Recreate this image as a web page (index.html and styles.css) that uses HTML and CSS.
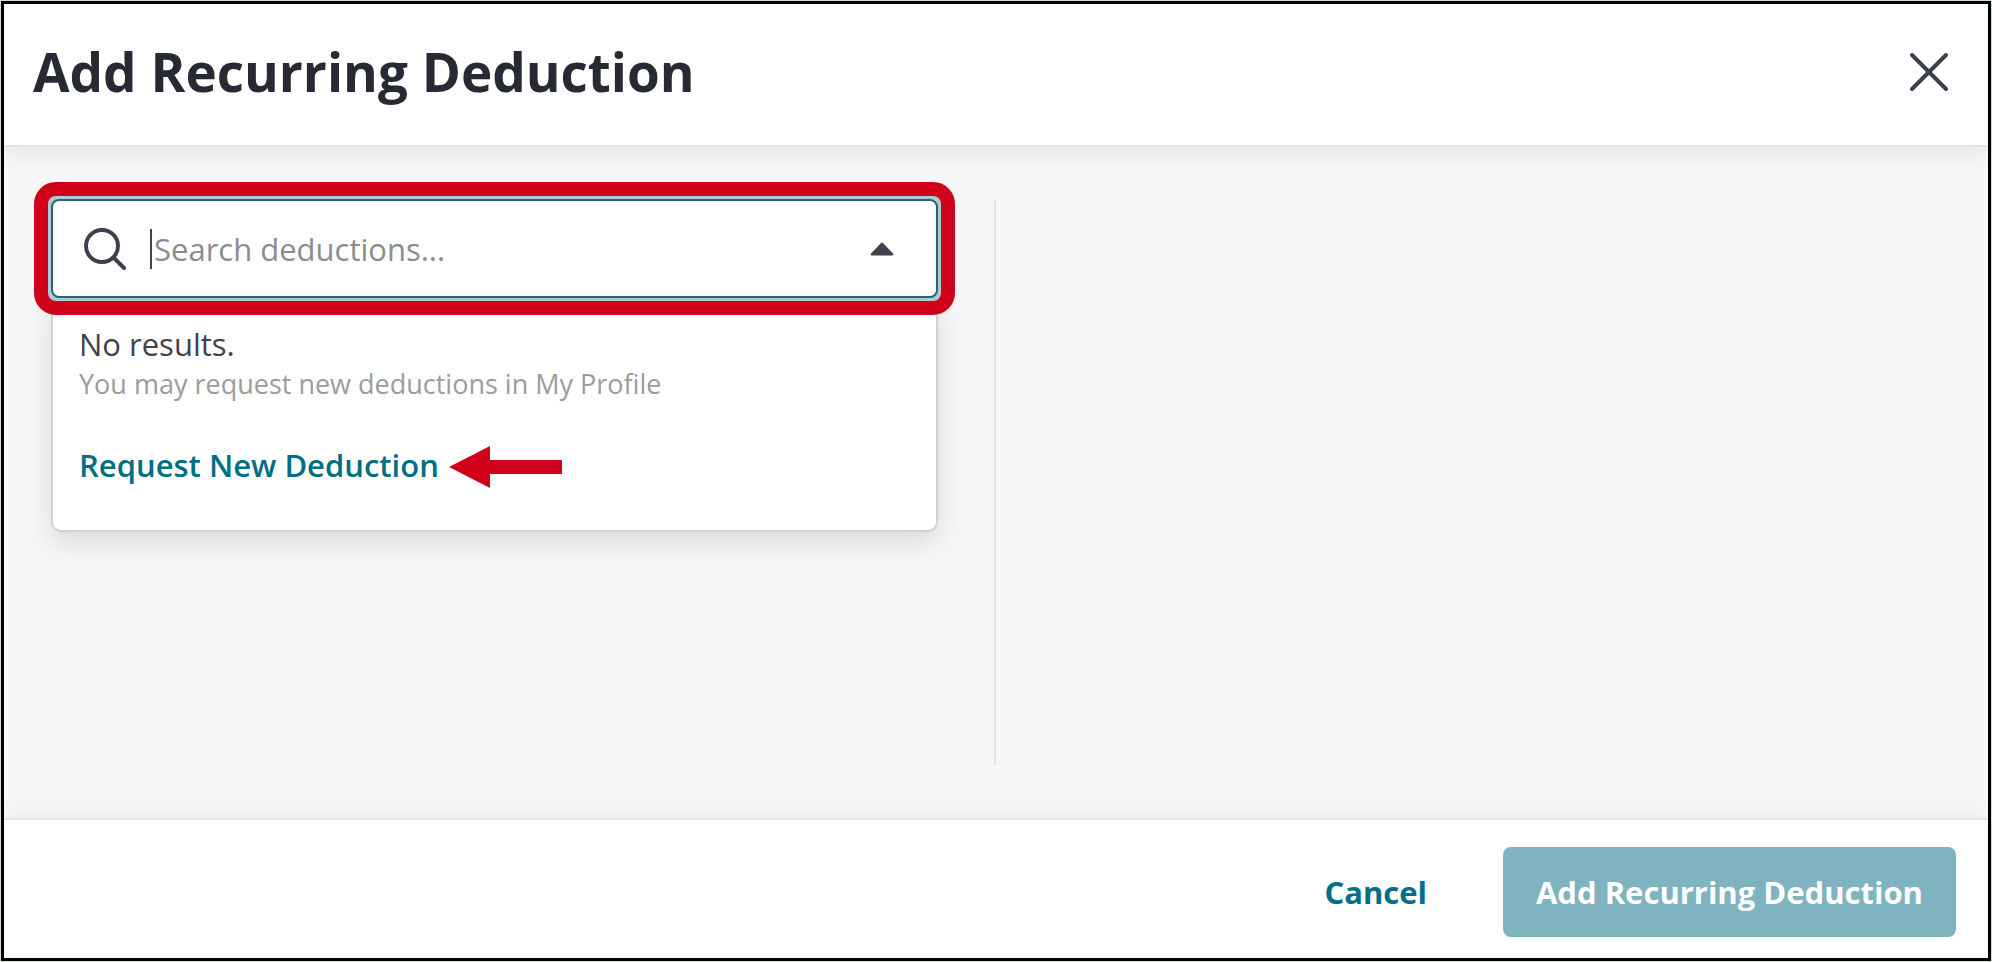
FILE: index.html
```
<!DOCTYPE html>
<html lang="en">
<head>
    <meta charset="UTF-8">
    <meta name="viewport" content="width=device-width, initial-scale=1.0">
    <title>Add Recurring Deduction</title>
    <link rel="stylesheet" href="styles.css">
</head>
<body>
    <div class="modal">
        <header class="modal-header">
            <h1>Add Recurring Deduction</h1>
            <button type="button" class="close-button" aria-label="Close">
                <svg width="40" height="40" viewBox="0 0 40 40" aria-hidden="true">
                    <path d="M3 3 L37 37 M37 3 L3 37" />
                </svg>
            </button>
        </header>

        <main class="modal-body">
            <section class="search-column">
                <div class="combo">
                    <label class="search-field">
                        <svg class="search-icon" width="42" height="42" viewBox="0 0 42 42" aria-hidden="true">
                            <circle cx="18" cy="18" r="16" />
                            <path d="M29.5 29.5 L40 40" />
                        </svg>
                        <span class="cursor"></span>
                        <input type="text" placeholder="Search deductions..." aria-label="Search deductions">
                        <svg class="caret-icon" width="24" height="14" viewBox="0 0 24 14" aria-hidden="true">
                            <path d="M11 1 Q12 0 13 1 L23 11.5 Q24 13.5 22 13.5 L2 13.5 Q0 13.5 1 11.5 Z" />
                        </svg>
                    </label>
                    <div class="dropdown">
                        <p class="no-results">No results.</p>
                        <p class="hint">You may request new deductions in My Profile</p>
                        <div class="request-row">
                            <a href="#" class="request-link">Request New Deduction</a>
                            <svg class="arrow" width="113" height="42" viewBox="0 0 113 42" aria-hidden="true">
                                <path d="M0 21 L41 0 V14 H113 V28 H41 V42 Z" />
                            </svg>
                        </div>
                    </div>
                    <div class="highlight"></div>
                </div>
            </section>
            <section class="detail-column"></section>
        </main>

        <footer class="modal-footer">
            <button type="button" class="cancel-button">Cancel</button>
            <button type="button" class="submit-button">Add Recurring Deduction</button>
        </footer>
    </div>
</body>
</html>
```
FILE: styles.css
```
* {
    box-sizing: border-box;
}
body {
    margin: 0;
    padding: 1px;
    height: 100vh;
    background-color: #d3dbd5;
    font-family: "Open Sans", "Noto Sans", sans-serif;
    font-size: 31px;
    line-height: 40px;
    color: #3e434f;
}
h1, p {
    margin: 0;
}
button, input {
    font: inherit;
    border: none;
    background: none;
    padding: 0;
}
button {
    cursor: pointer;
}
.modal {
    display: flex;
    flex-direction: column;
    height: 100%;
    border: 3px solid black;
    background-color: #f7f7f7;
    overflow: hidden;
}
.modal-header {
    display: flex;
    align-items: center;
    justify-content: space-between;
    padding: 32px 39px 37px 29px;
    border-bottom: 2px solid #e3e3e3;
    background-color: white;
    box-shadow: 0 6px 24px rgba(0, 0, 0, 0.08);
}
.modal-header h1 {
    font-size: 53px;
    font-weight: 700;
    line-height: 72px;
    color: #272a34;
}
.close-button {
    display: flex;
}
.close-button path {
    fill: none;
    stroke: #3b404c;
    stroke-width: 4;
    stroke-linecap: round;
}
.modal-body {
    flex: 1;
    display: grid;
    grid-template-columns: 1fr 1fr;
    padding: 52px 0;
}
.search-column {
    padding: 0 56px 0 47px;
    border-right: 2px solid #e3e3e3;
}
.combo {
    position: relative;
}
.search-field {
    position: relative;
    z-index: 2;
    display: flex;
    align-items: center;
    height: 99px;
    padding: 0 42px 0 31px;
    border: 2px solid #2b6470;
    border-radius: 8px;
    background-color: white;
    box-shadow: 0 0 0 4px #a9ccd4;
}
.search-icon {
    fill: none;
    stroke: #3b404c;
    stroke-width: 4;
    stroke-linecap: round;
}
.cursor {
    width: 2px;
    height: 40px;
    margin-left: 24px;
    background-color: #3e434f;
}
.search-field input {
    flex: 1;
    min-width: 0;
    height: 48px;
    padding-left: 2px;
    color: #3e434f;
    outline: none;
}
.search-field input::placeholder {
    color: #8c8c8c;
    opacity: 1;
}
.caret-icon {
    fill: #3e434f;
}
.dropdown {
    position: absolute;
    z-index: 1;
    top: 100%;
    left: 0;
    right: 0;
    padding: 26px 26px 41px;
    border: 2px solid #d2d2d4;
    border-top: none;
    border-radius: 0 0 10px 10px;
    background-color: white;
    box-shadow: 0 10px 28px rgba(0, 0, 0, 0.12);
}
.hint {
    font-size: 27px;
    color: #9c9c9c;
}
.request-row {
    display: flex;
    align-items: center;
    gap: 10px;
    margin-top: 41px;
}
.request-link {
    padding-bottom: 4px;
    font-weight: 600;
    color: #006e85;
    text-decoration: none;
}
.arrow {
    fill: #d0021b;
}
.highlight {
    position: absolute;
    z-index: 3;
    inset: -17px;
    border: 14px solid #d0021b;
    border-radius: 22px;
    pointer-events: none;
}
.modal-footer {
    display: flex;
    justify-content: flex-end;
    align-items: center;
    gap: 76px;
    padding: 27px 32px 21px;
    border-top: 2px solid #e3e3e3;
    background-color: white;
    box-shadow: 0 -4px 20px rgba(0, 0, 0, 0.05);
}
.cancel-button {
    font-weight: 700;
    color: #006e85;
}
.submit-button {
    padding: 25px 33px;
    border-radius: 8px;
    background-color: #7fb3c0;
    color: white;
    font-weight: 700;
}
```
